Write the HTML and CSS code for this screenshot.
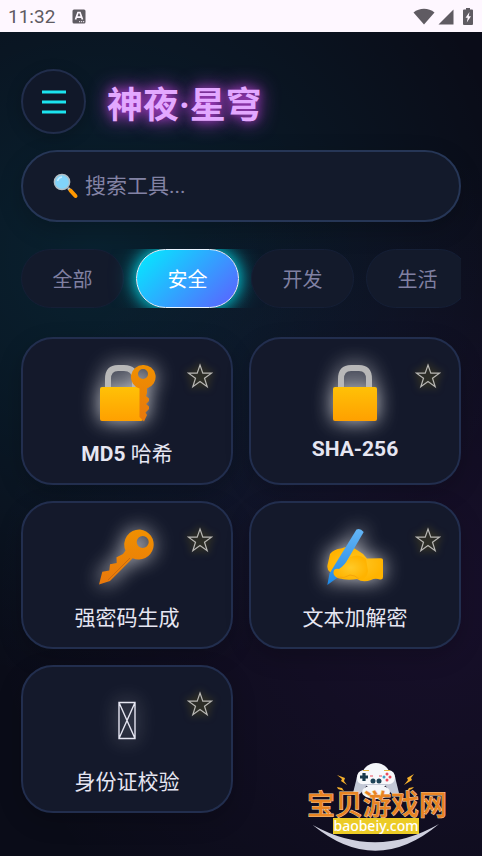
FILE: index.html
```
<!DOCTYPE html>
<html lang="zh-CN">
<head>
    <meta charset="UTF-8">
    <meta name="viewport" content="width=device-width, initial-scale=1.0">
    <title>神夜·星穹</title>
    <link rel="stylesheet" href="styles.css">
</head>
<body>
    <!-- 状态栏 -->
    <div class="status-bar">
        <span class="status-time">11:32</span>
        <svg class="status-app" width="14" height="15" viewBox="0 0 14 15">
            <rect x="0.5" y="0.5" width="13" height="14" rx="1.5" fill="#5f5b62"/>
            <path d="M3.5 10.500L6 3.500h2L10.500 10.500M4.700 8.200h4.600" fill="none" stroke="#fef7ff" stroke-width="1.7"/>
            <path d="M7 12.700h1.200M9 12.700h1.200M11 12.700h1.200" stroke="#fef7ff" stroke-width="1"/>
        </svg>
        <div class="status-icons">
            <svg width="22" height="17" viewBox="0 0 22 17"><path d="M0.500 4.500C6.500 -0.500 15.500 -0.500 21.500 4.500L11 16.500z" fill="#5f5b62"/></svg>
            <svg width="16" height="17" viewBox="0 0 16 17"><path d="M0.500 16.500L15.500 1.500v15z" fill="#5f5b62"/></svg>
            <svg class="battery" width="10" height="17" viewBox="0 0 10 17"><path d="M3 0h4v1.500h2q1 0 1 1V16q0 1-1 1H1q-1 0-1-1V2.500q0-1 1-1h2z" fill="#5f5b62"/><path d="M6.500 4L2.500 9.700h2.200L3.800 14.500L8 8.300H5.700z" fill="#fef7ff"/></svg>
        </div>
    </div>

    <main class="app">
        <header class="header">
            <button class="menu-btn" aria-label="菜单">
                <svg width="26" height="24" viewBox="0 0 26 24"><path d="M1 2h24M1 12h24M1 22h24" stroke="#1ce4ef" stroke-width="2.800"/></svg>
            </button>
            <h1 class="title">神夜·星穹</h1>
        </header>

        <label class="search">
            <svg width="26" height="26" viewBox="0 0 26 26">
                <path d="M15 15l3 3" stroke="#b0bec5" stroke-width="2.500"/>
                <path d="M17.500 17.500l5 5.500" stroke="#ff9800" stroke-width="4" stroke-linecap="round"/>
                <circle cx="9" cy="9" r="7.600" fill="#81d4fa" stroke="#b0bec5" stroke-width="1.500"/>
                <path d="M4.500 8q1-3.500 4.500-4" fill="none" stroke="#c8edff" stroke-width="1.500"/>
            </svg>
            <input type="text" placeholder="搜索工具..." aria-label="搜索工具">
        </label>

        <nav class="tabs">
            <button class="tab">全部</button>
            <button class="tab active">安全</button>
            <button class="tab">开发</button>
            <button class="tab">生活</button>
        </nav>

        <svg class="defs" width="0" height="0">
            <defs>
                <linearGradient id="gold" x1="0" y1="0" x2="0" y2="1"><stop offset="0" stop-color="#ffc107"/><stop offset="1" stop-color="#ffa000"/></linearGradient>
                <linearGradient id="key" x1="0" y1="0" x2="0" y2="1"><stop offset="0" stop-color="#f09000"/><stop offset="1" stop-color="#e8780c"/></linearGradient>
                <linearGradient id="pen" x1="0" y1="0" x2="0" y2="1"><stop offset="0" stop-color="#64b5f6"/><stop offset="1" stop-color="#1e88e5"/></linearGradient>
                <radialGradient id="hand"><stop offset="0" stop-color="#ffca28"/><stop offset="1" stop-color="#ffb300"/></radialGradient>
                <symbol id="star" viewBox="0 0 26 26"><path d="M13 2L15.800 10.200H24.500L17.500 15.300L20.200 23.800L13 18.600L5.800 23.800L8.500 15.300L1.500 10.200H10.200z" fill="none" stroke="currentColor" stroke-width="1.200"/></symbol>
            </defs>
        </svg>

        <div class="grid">
            <div class="card">
                <button class="fav" aria-label="收藏"><svg width="26" height="26"><use href="#star"/></svg></button>
                <svg class="icon" width="60" height="60" viewBox="0 0 60 60">
                    <path d="M11 26V16Q11 5 21 5H27Q38 5 38 16V26" fill="none" stroke="#b8b8b8" stroke-width="6"/>
                    <rect x="3" y="24" width="43" height="34" rx="2" fill="url(#gold)"/>
                    <path fill="url(#key)" fill-rule="evenodd" d="M46 2A12 12 0 0 0 42.500 25.500V54L47 58.500L50 52L48.500 49.500L52 46V43.500L49 41L52 38V35.500L49 33L50 30V25.500A12 12 0 0 0 46 2zM46 6a5 5 0 1 1 0 10 5 5 0 1 1 0-10z"/>
                </svg>
                <div class="name"><strong>MD5</strong> 哈希</div>
            </div>
            <div class="card">
                <button class="fav" aria-label="收藏"><svg width="26" height="26"><use href="#star"/></svg></button>
                <svg class="icon" width="60" height="60" viewBox="0 0 60 60">
                    <path d="M16 26V16Q16 5 26 5H34Q44 5 44 16V26" fill="none" stroke="#b8b8b8" stroke-width="6"/>
                    <rect x="8" y="24" width="44" height="34" rx="2" fill="url(#gold)"/>
                </svg>
                <div class="name"><strong>SHA-256</strong></div>
            </div>
            <div class="card">
                <button class="fav" aria-label="收藏"><svg width="26" height="26"><use href="#star"/></svg></button>
                <svg class="icon" width="60" height="60" viewBox="0 0 60 60">
                    <path fill="url(#key)" fill-rule="evenodd" d="M43 2.500A15 15 0 0 0 28.500 23.500L26 27L19.500 30.300L19.700 36L13 37.300L12.300 43.500L5.300 44.700L2 57.500L13 54L35.700 31.200A15 15 0 1 0 43 2.500zM45.700 9a6 6 0 1 1 0 12 6 6 0 1 1 0-12z"/>
                    <path d="M11 53L33 31" stroke="#c96a10" stroke-width="1"/>
                </svg>
                <div class="name">强密码生成</div>
            </div>
            <div class="card">
                <button class="fav" aria-label="收藏"><svg width="26" height="26"><use href="#star"/></svg></button>
                <svg class="icon" width="60" height="60" viewBox="0 0 60 60">
                    <path d="M3 36L5 27Q9 22 16 21.500Q26 18 32 23Q38 26 42 31.500L56 31.300Q58 31.300 58 33V50Q58 53 55 52.500Q50 51 46 53Q38 56 32 52Q22 54 13 51Q8 48 5 45Q1 42 3 36z" fill="url(#hand)"/>
                    <path d="M31.500 2.500Q35 0.500 38.700 5L12 51L2.300 58L4.500 46.500z" fill="url(#pen)"/>
                    <path d="M8.500 45Q9 41 14 42Q20 38 25 30Q34 26 41 32L43 44Q42 52 36 53Q30 48 25 48Q19 52 13 51Q8 49 8.500 45z" fill="url(#hand)"/>
                    <path d="M12 50Q19 52 25 48Q30 48 34 52" fill="none" stroke="#f5a50b" stroke-width="1"/>
                </svg>
                <div class="name">文本加解密</div>
            </div>
            <div class="card">
                <button class="fav" aria-label="收藏"><svg width="26" height="26"><use href="#star"/></svg></button>
                <svg class="icon soft" width="60" height="60" viewBox="0 0 60 60">
                    <path d="M22 11.500H38V47.500H22zL38 47.500M38 11.500L22 47.500" fill="none" stroke="#e6e6f2" stroke-width="1.400"/>
                </svg>
                <div class="name">身份证校验</div>
            </div>
        </div>
    </main>

    <!-- 水印 -->
    <svg class="watermark" width="154" height="96" viewBox="0 0 154 96">
        <path d="M12.700 67Q76 119 139 66Q76 102 12.700 67z" fill="#cfd0de"/>
        <ellipse cx="76" cy="18" rx="14" ry="13" fill="#f4f6fa"/>
        <path d="M63 13H89Q95 14 96 23L99 35Q96 39 91 35L85 27H67L61 35Q56 39 53 35L56 23Q57 14 63 13z" fill="#c3c8d6"/>
        <ellipse cx="76" cy="34" rx="14" ry="7" fill="#f4f6fa"/>
        <path d="M63 12H89Q95 13 95 20Q94 27 87 26H65Q57 27 57 20Q57 13 63 12z" fill="#f7f8fb"/>
        <path d="M64 15v8M60 19h8" stroke="#18394b" stroke-width="3.200"/>
        <circle cx="73" cy="23" r="2.500" fill="#1c4358"/><circle cx="79" cy="23" r="2.500" fill="#1c4358"/>
        <circle cx="87" cy="16" r="1.500" fill="#e94c5c"/><circle cx="87" cy="22" r="1.500" fill="#e94c5c"/><circle cx="84" cy="19" r="1.500" fill="#3f9fc4"/><circle cx="90" cy="19" r="1.500" fill="#e94c5c"/>
        <path d="M70 18h3M79 18h3" stroke="#e94c5c" stroke-width="1"/>
        <path d="M63 12.500h6M84 12.500h6" stroke="#e5b53c" stroke-width="1"/>
        <path d="M37 17L45 20L44 23L47 27L41 23L42 21zM37 29L42 30L44 33L38 31zM114 16L107 20L108 22L104 27L112 22L111 20zM114 29L109 30L107 33L112 31z" fill="#f5b02c"/>
        <text class="mark-name" x="7" y="57">宝贝游戏网</text>
        <rect x="33" y="60" width="86" height="16" fill="#eccb26"/>
        <text class="mark-url" x="76" y="73" text-anchor="middle">baobeiy.com</text>
    </svg>
</body>
</html>
```
FILE: styles.css
```
* {box-sizing: border-box; margin: 0; padding: 0}
body {
    min-height: 100vh;
    position: relative;
    color: #e6e6f2;
    font-family: Roboto, "Noto Sans CJK SC", sans-serif;
    background:
        radial-gradient(circle at 20% 30%, rgba(0, 220, 255, 0.1), transparent 60%),
        radial-gradient(circle at 90% 70%, rgba(180, 50, 255, 0.08), transparent 60%),
        #0a0c18;
}
button {font: inherit; color: inherit; cursor: pointer}
svg {display: block; flex: none}
.defs {position: absolute}

.status-bar {display: flex; align-items: center; height: 32px; padding: 0 9px 0 8px; background: #fef7ff; color: #5f5b62}
.status-time {font-size: 19px}
.status-app {margin-left: 17px}
.status-icons {display: flex; gap: 3px; margin-left: auto}
.battery {margin-left: 6px}

.app {padding: 37px 21px 40px}

.header {display: flex; align-items: center; gap: 21px; margin-bottom: 16px}
.menu-btn {
    display: flex; align-items: center; justify-content: center;
    width: 65px; height: 65px; border-radius: 50%;
    background: #111829; border: 2px solid #212d4b;
    box-shadow: 0 4px 16px rgba(0, 0, 0, 0.2);
}
.title {font-size: 36px; font-weight: 700; color: #e3a8ff; text-shadow: 0 0 20px #c944e8, 0 0 10px rgba(201, 68, 232, 0.6)}

.search {
    display: flex; align-items: center; gap: 6px;
    height: 72px; padding: 0 30px; margin-bottom: 27px;
    border: 2px solid #263656; border-radius: 36px;
    background: #131a2b;
    box-shadow: 0 8px 24px rgba(0, 0, 0, 0.2);
}
.search input {flex: 1; min-width: 0; border: 0; outline: 0; background: none; color: #e6e6f2; font: inherit; font-size: 21px}
.search input::placeholder {color: #8383a5; opacity: 1}

.tabs {display: flex; gap: 12px; margin-bottom: 29px; overflow-x: auto; scrollbar-width: none}
.tab {
    flex: none; height: 59px; min-width: 103px; padding: 0 30px;
    border: 1px solid #151f36; border-radius: 30px;
    background: #131a2b; color: #8080a2; font-size: 20px;
}
.tab.active {
    color: #fff; border-color: #e8f4ff;
    background: linear-gradient(135deg, #00f0ff, #5f5cff) border-box;
    box-shadow: 0 0 16px rgba(0, 240, 255, 0.8), 0 0 26px rgba(0, 240, 255, 0.5);
}

.grid {display: grid; grid-template-columns: 1fr 1fr; gap: 16px}
.card {
    position: relative;
    display: flex; flex-direction: column; align-items: center;
    padding: 24px 12px 16px;
    border: 2px solid #222e4e; border-radius: 32px;
    background: #14192b;
    box-shadow: 0 8px 24px rgba(0, 0, 0, 0.2);
}
.icon {margin-bottom: 14px; overflow: visible; filter: drop-shadow(0 0 10px rgba(255, 255, 255, 0.8))}
.icon.soft {filter: drop-shadow(0 0 10px rgba(255, 255, 255, 0.6))}
.name {font-size: 21px; white-space: nowrap}
.fav {
    position: absolute; top: 24px; right: 18px;
    border: 0; background: none; color: #b9b8b4;
    filter: drop-shadow(0 0 4px rgba(255, 215, 0, 0.5));
}

.watermark {position: absolute; right: 28px; bottom: 2px}
.mark-name {font: 500 28px Roboto, "Noto Sans CJK SC", sans-serif; fill: #e98422; stroke: #f3cfa4; stroke-width: 1px; paint-order: stroke}
.mark-url {font: 500 14px "Noto Sans", sans-serif; fill: #fff}
```
